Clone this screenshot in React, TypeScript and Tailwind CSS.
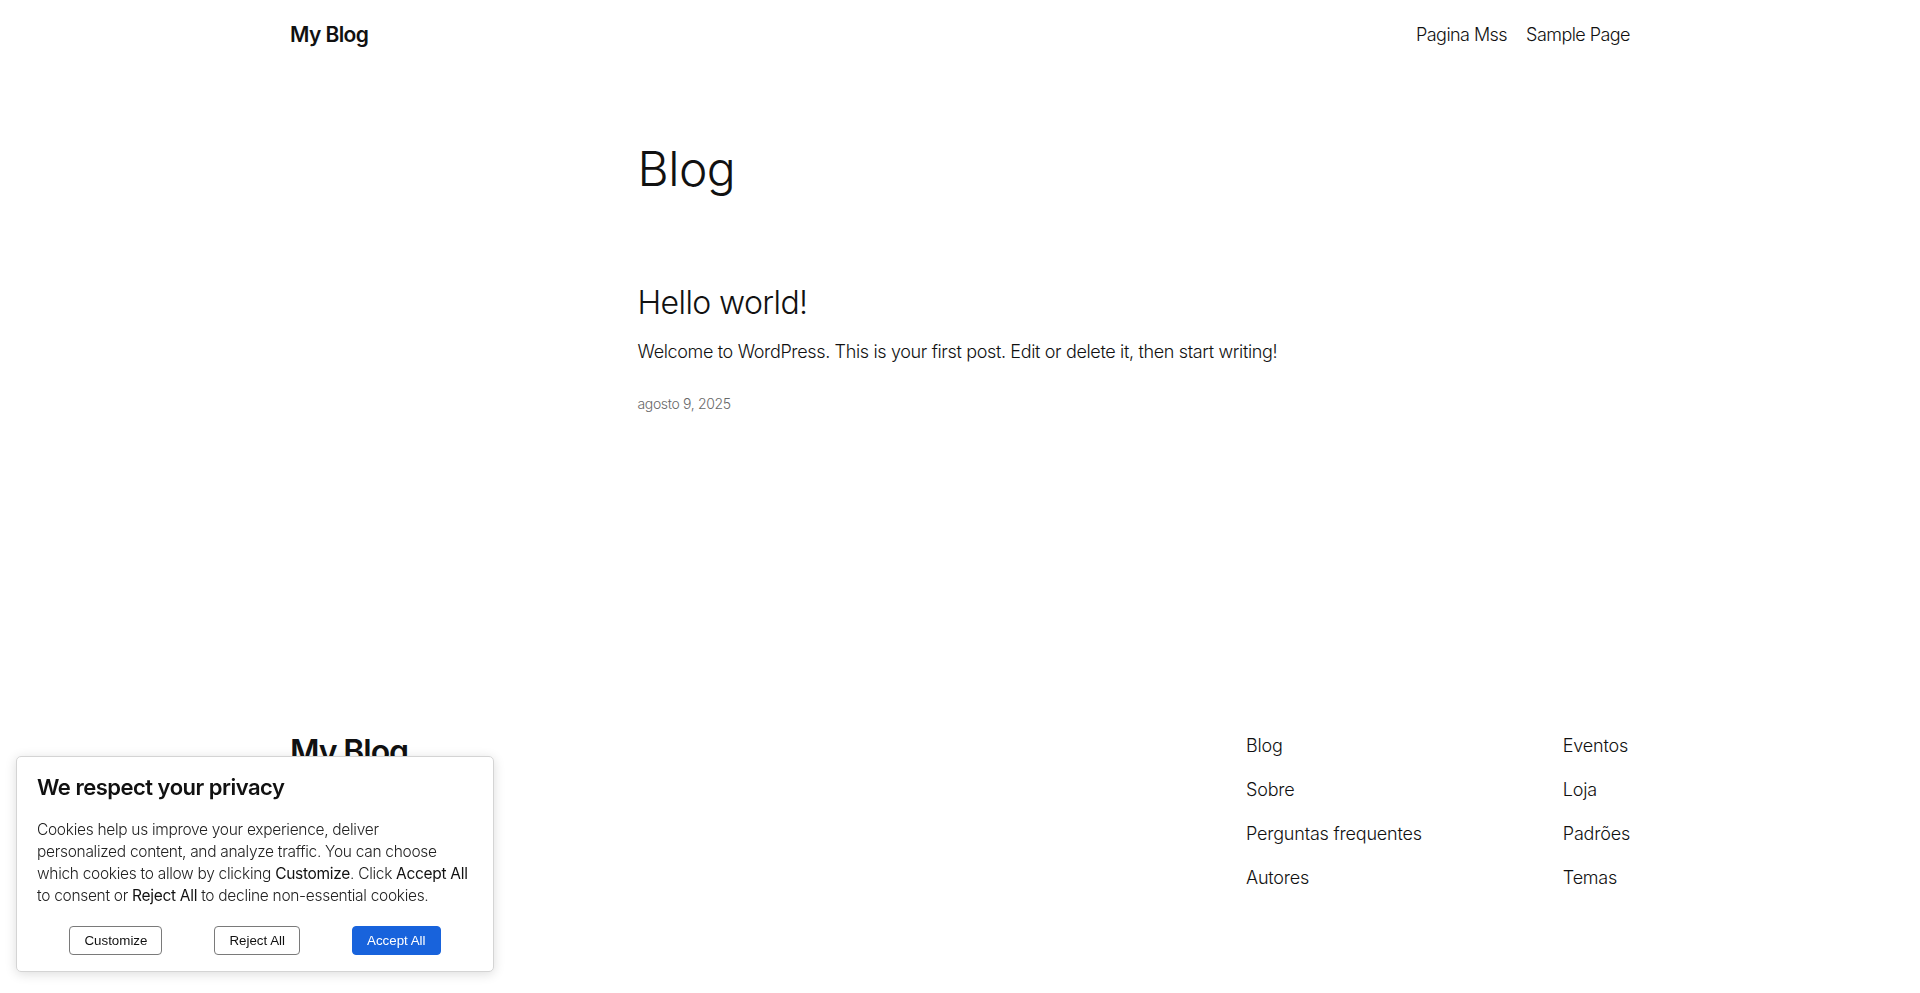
import React from "react";

// Block-theme blog index: header, one post excerpt, footer nav and a cookie notice.
const FOOTER_LEFT = ["Blog", "Sobre", "Perguntas frequentes", "Autores"];
const FOOTER_RIGHT = ["Eventos", "Loja", "Padrões", "Temas"];

function CookieBanner() {
  return (
    <div className="fixed bottom-[21px] left-[16px] w-[478px] rounded-[5px] border border-[#d4d4d4] bg-white px-5 py-4 shadow-[0_2px_12px_rgba(0,0,0,0.14)]">
      <p className="text-[22px] font-semibold leading-[28px] tracking-[-0.5px] text-[#111]">We respect your privacy</p>
      <p className="mt-[18px] whitespace-nowrap text-[15.5px] font-light leading-[22px] tracking-[-0.3px] text-[#222]">
        Cookies help us improve your experience, deliver
        <br />
        personalized content, and analyze traffic. You can choose
        <br />
        which cookies to allow by clicking <span className="font-normal text-[#111]">Customize</span>. Click{" "}
        <span className="font-normal text-[#111]">Accept All</span>
        <br />
        to consent or <span className="font-normal text-[#111]">Reject All</span> to decline non-essential cookies.
      </p>
      <div className="mt-[19px] flex justify-center gap-[52px] font-['Liberation_Sans',Arial,sans-serif] text-[13.33px]">
        <button className="h-[29px] rounded-[4px] border border-[#7a7a7a] bg-white px-[14px] text-[#111]">Customize</button>
        <button className="h-[29px] rounded-[4px] border border-[#7a7a7a] bg-white px-[14px] text-[#111]">Reject All</button>
        <button className="h-[29px] rounded-[4px] border border-[#1863dc] bg-[#1863dc] px-[14px] text-white">Accept All</button>
      </div>
    </div>
  );
}

export default function App() {
  return (
    <div className="h-[993px] overflow-hidden bg-white font-['Inter','Noto_Sans',sans-serif] text-[#111]">
      <header className="mx-auto flex w-[1340px] items-center justify-between py-5">
        <a className="text-[21px] font-semibold leading-[30px] tracking-[-0.6px]">My Blog</a>
        <nav className="flex gap-[19px] text-[18px] font-light leading-[30px] tracking-[-0.55px]">
          <a>Pagina Mss</a>
          <a>Sample Page</a>
        </nav>
      </header>

      <main className="mx-auto w-[645px]">
        <h1 className="mt-[70px] text-[48px] font-light leading-[58px] tracking-[-0.5px]">Blog</h1>
        <article>
          <h2 className="mt-[85px] text-[32px] font-light leading-[40px] tracking-[-0.6px]">Hello world!</h2>
          <p className="mt-[15px] whitespace-nowrap text-[18px] font-light leading-[28px] tracking-[-0.35px]">
            Welcome to WordPress. This is your first post. Edit or delete it, then start writing!
          </p>
          <p className="mt-[27px] text-[14px] font-light leading-[22px] tracking-[-0.35px] text-[#686868]">agosto 9, 2025</p>
        </article>
      </main>

      <footer className="mx-auto mt-[317px] flex w-[1340px] justify-between">
        <p className="text-[32px] font-semibold leading-[40px] tracking-[-1.1px]">My Blog</p>
        <div className="flex w-[384px] text-[18px] font-light leading-[28px] tracking-[-0.2px]">
          <ul className="flex w-[318px] flex-col gap-4">
            {FOOTER_LEFT.map((l) => (
              <li key={l}>{l}</li>
            ))}
          </ul>
          <ul className="flex flex-1 flex-col gap-4">
            {FOOTER_RIGHT.map((l) => (
              <li key={l}>{l}</li>
            ))}
          </ul>
        </div>
      </footer>

      <CookieBanner />
    </div>
  );
}
